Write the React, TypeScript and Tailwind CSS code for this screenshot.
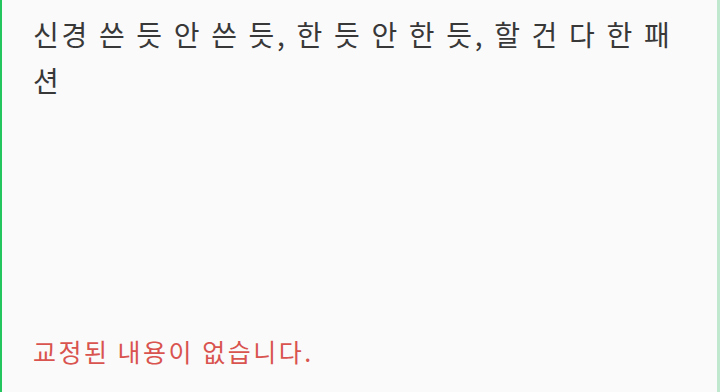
export default function App() {
  return (
    <div
      className="h-[392px] w-[720px] overflow-hidden bg-[#fafafa] border-l-2 border-l-[#22c55e] border-r-[3px] border-r-[#bfe8cf] flex flex-col justify-between px-[31px] pt-[11px] pb-[25px]"
      style={{ fontFamily: '"Noto Sans CJK KR", "Noto Sans", sans-serif' }}
    >
      <p className="text-[28px] leading-[46px] text-[#383838] tracking-[2.7px]">
        신경 쓴 듯 안 쓴 듯, 한 듯 안 한 듯, 할 건 다 한 패<br />션
      </p>
      <p className="text-[25px] leading-[32px] text-[#d9534f] tracking-[2.5px]">교정된 내용이 없습니다.</p>
    </div>
  )
}
